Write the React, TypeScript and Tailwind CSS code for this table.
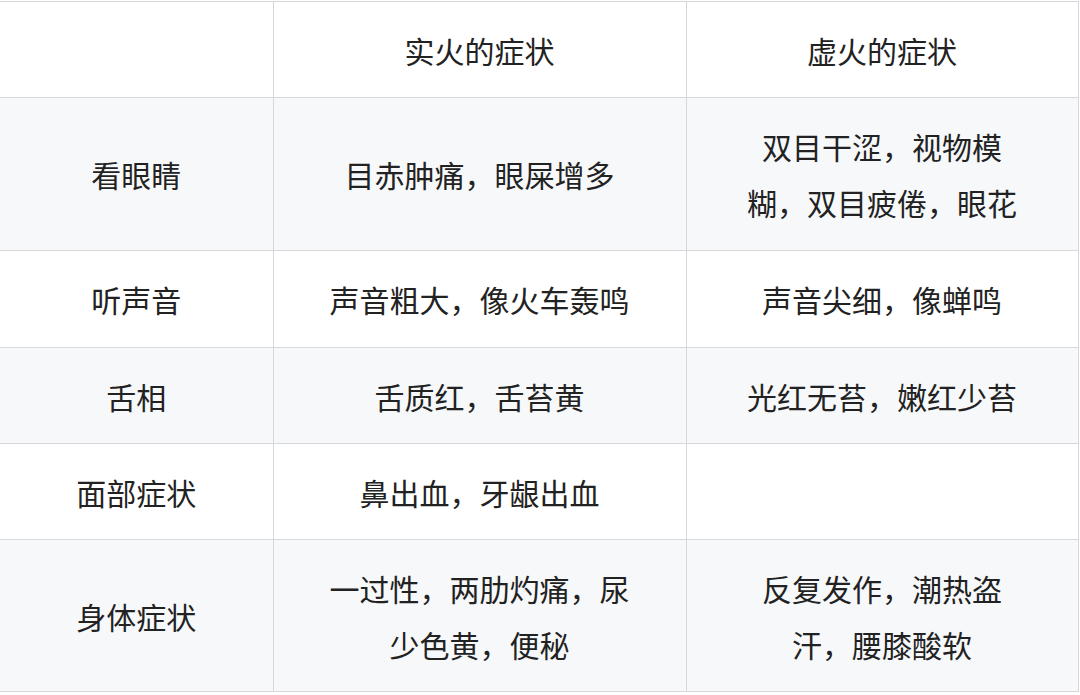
const rows: { label: string; shi: string; xu: string; h: string; bg: string }[] = [
  { label: "看眼睛", shi: "目赤肿痛，眼屎增多", xu: "双目干涩，视物模糊，双目疲倦，眼花", h: "h-[153px]", bg: "bg-[#f7f8fa]" },
  { label: "听声音", shi: "声音粗大，像火车轰鸣", xu: "声音尖细，像蝉鸣", h: "h-[97px]", bg: "bg-white" },
  { label: "舌相", shi: "舌质红，舌苔黄", xu: "光红无苔，嫩红少苔", h: "h-[96px]", bg: "bg-[#f7f8fa]" },
  { label: "面部症状", shi: "鼻出血，牙龈出血", xu: "", h: "h-[96px]", bg: "bg-white" },
  { label: "身体症状", shi: "一过性，两肋灼痛，尿少色黄，便秘", xu: "反复发作，潮热盗汗，腰膝酸软", h: "h-[152px]", bg: "bg-[#f7f8fa]" },
];

export default function App() {
  return (
    <div
      className="w-[1080px] h-[695px] bg-white text-[#222] text-[30px] leading-[56px] overflow-hidden"
      style={{ fontFamily: '"Noto Sans CJK SC", "Noto Sans", sans-serif' }}
    >
      <table className="table-fixed border-collapse w-[1078px] text-center mt-px">
        <colgroup>
          <col className="w-[273px]" />
          <col className="w-[413px]" />
          <col className="w-[392px]" />
        </colgroup>
        <thead>
          <tr className="h-[96px] bg-white">
            <th className="font-normal border-t border-b border-r border-[#d6d7da]"></th>
            <th className="font-normal border-t border-b border-r border-[#d6d7da] px-12">实火的症状</th>
            <th className="font-normal border-t border-b border-r border-[#d6d7da] px-[56px]">虚火的症状</th>
          </tr>
        </thead>
        <tbody>
          {rows.map((r) => (
            <tr key={r.label} className={`${r.h} ${r.bg}`}>
              <td className="border-b border-r border-[#d6d7da]">{r.label}</td>
              <td className="border-b border-r border-[#d6d7da] px-12">{r.shi}</td>
              <td className="border-b border-r border-[#d6d7da] px-[56px]">{r.xu}</td>
            </tr>
          ))}
        </tbody>
      </table>
    </div>
  );
}
